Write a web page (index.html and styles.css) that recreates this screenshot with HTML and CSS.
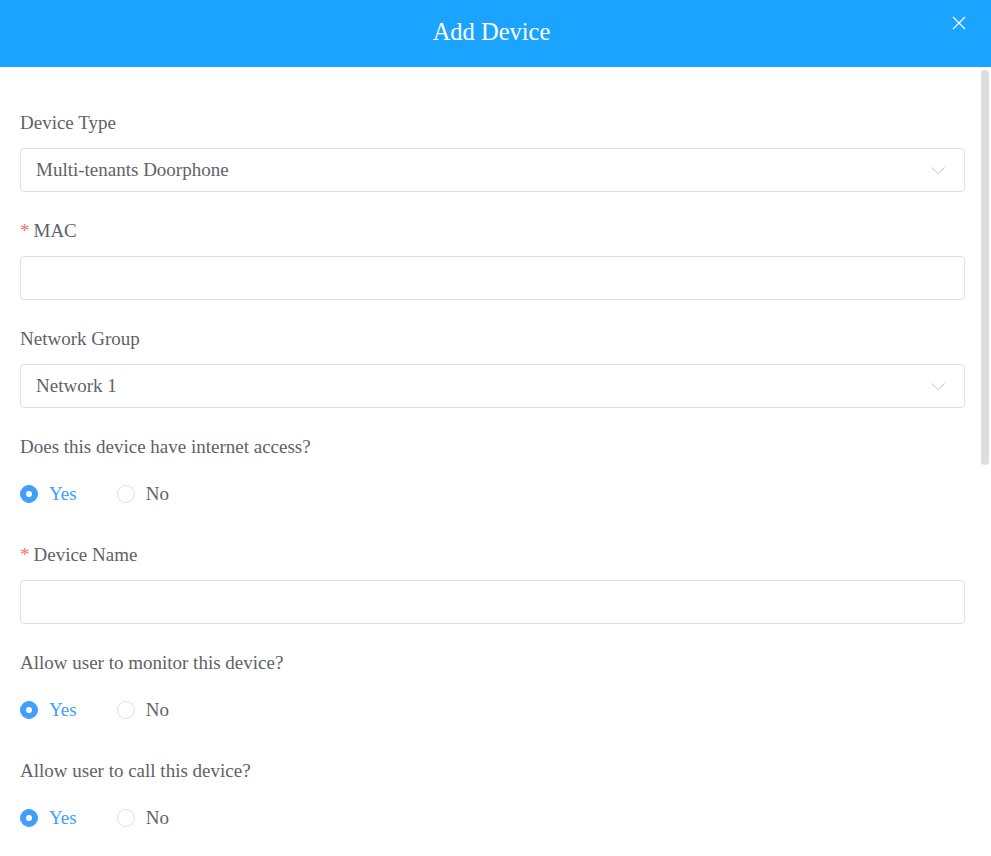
FILE: index.html
```html
<!DOCTYPE html>
<html lang="en">
<head>
    <meta charset="UTF-8">
    <meta name="viewport" content="width=device-width, initial-scale=1.0">
    <title>Add Device</title>
    <link rel="stylesheet" href="styles.css">
</head>
<body>

    <div class="dialog">
        <div class="dialog-header">
            <span class="dialog-title">Add Device</span>
            <button class="dialog-close" aria-label="Close">
                <svg width="14" height="14" viewBox="0 0 14 14"><path d="M1 1L13 13M13 1L1 13" stroke="#fff" stroke-width="1.3" fill="none"/></svg>
            </button>
        </div>

        <div class="dialog-body">
            <form class="form">
                <div class="form-item">
                    <label class="form-label">Device Type</label>
                    <div class="select">
                        <span>Multi-tenants Doorphone</span>
                        <svg class="arrow" width="14" height="8" viewBox="0 0 14 8"><path d="M0.5 0.5L7 6.5L13.5 0.5" stroke="#c0c4cc" stroke-width="1" fill="none"/></svg>
                    </div>
                </div>

                <div class="form-item">
                    <label class="form-label"><i class="req">*</i>MAC</label>
                    <input class="input" type="text">
                </div>

                <div class="form-item">
                    <label class="form-label">Network Group</label>
                    <div class="select">
                        <span>Network 1</span>
                        <svg class="arrow" width="14" height="8" viewBox="0 0 14 8"><path d="M0.5 0.5L7 6.5L13.5 0.5" stroke="#c0c4cc" stroke-width="1" fill="none"/></svg>
                    </div>
                </div>

                <div class="form-item">
                    <label class="form-label">Does this device have internet access?</label>
                    <div class="radio-group">
                        <label class="radio checked"><span class="radio-dot"></span>Yes</label>
                        <label class="radio"><span class="radio-dot"></span>No</label>
                    </div>
                </div>

                <div class="form-item">
                    <label class="form-label"><i class="req">*</i>Device Name</label>
                    <input class="input" type="text">
                </div>

                <div class="form-item">
                    <label class="form-label">Allow user to monitor this device?</label>
                    <div class="radio-group">
                        <label class="radio checked"><span class="radio-dot"></span>Yes</label>
                        <label class="radio"><span class="radio-dot"></span>No</label>
                    </div>
                </div>

                <div class="form-item">
                    <label class="form-label">Allow user to call this device?</label>
                    <div class="radio-group">
                        <label class="radio checked"><span class="radio-dot"></span>Yes</label>
                        <label class="radio"><span class="radio-dot"></span>No</label>
                    </div>
                </div>
            </form>

            <div class="scroll-thumb"></div>
        </div>
    </div>

</body>
</html>
```

FILE: styles.css
```css
html, body {
    margin: 0;
    padding: 0;
    background: #fff;
    font-family: "Liberation Serif", "Times New Roman", serif;
    overflow: hidden;
}
.dialog {
    width: 991px;
    height: 856px;
    display: flex;
    flex-direction: column;
}
.dialog-header {
    height: 67px;
    flex: none;
    background: #1aa3ff;
    display: flex;
    align-items: center;
    justify-content: center;
    position: relative;
}
.dialog-title {
    color: #fff;
    font-size: 24.5px;
    margin: -4px 8px 0 0;
}
.dialog-close {
    position: absolute;
    top: 16px;
    right: 25px;
    padding: 0;
    border: none;
    background: none;
    cursor: pointer;
    line-height: 0;
}
.dialog-body {
    flex: 1;
    overflow: hidden;
    position: relative;
}
.scroll-thumb {
    position: absolute;
    top: 3px;
    right: 2px;
    width: 8px;
    height: 395px;
    border-radius: 4px;
    background: #dddddd;
}
.form {
    padding: 41px 26px 0 20px;
}
.form-item {
    margin-bottom: 24px;
}
.form-label {
    display: block;
    line-height: 30px;
    padding-bottom: 10px;
    font-size: 19px;
    color: #606266;
}
.req {
    font-style: normal;
    color: #f56c6c;
    margin-right: 4px;
}
.select, .input {
    box-sizing: border-box;
    width: 100%;
    height: 44px;
    border: 1px solid #dcdfe6;
    border-radius: 4px;
    background: #fff;
    font-family: inherit;
    font-size: 19px;
    color: #606266;
    outline: none;
}
.select {
    display: flex;
    align-items: center;
    justify-content: space-between;
    padding: 0 19px 0 15px;
}
.input {
    display: block;
    padding: 0 15px;
}
.arrow {
    margin-top: 1px;
}
.radio-group {
    height: 44px;
    display: flex;
    align-items: center;
    gap: 40px;
}
.radio {
    display: flex;
    align-items: center;
    font-size: 19px;
    color: #606266;
    cursor: pointer;
}
.radio-dot {
    box-sizing: border-box;
    width: 18px;
    height: 18px;
    border: 1px solid #dcdfe6;
    border-radius: 50%;
    margin-right: 11px;
    display: flex;
    align-items: center;
    justify-content: center;
}
.radio.checked {
    color: #409eff;
}
.radio.checked .radio-dot {
    background: #409eff;
    border-color: #409eff;
}
.radio.checked .radio-dot::after {
    content: "";
    width: 6px;
    height: 6px;
    border-radius: 50%;
    background: #fff;
}
```
